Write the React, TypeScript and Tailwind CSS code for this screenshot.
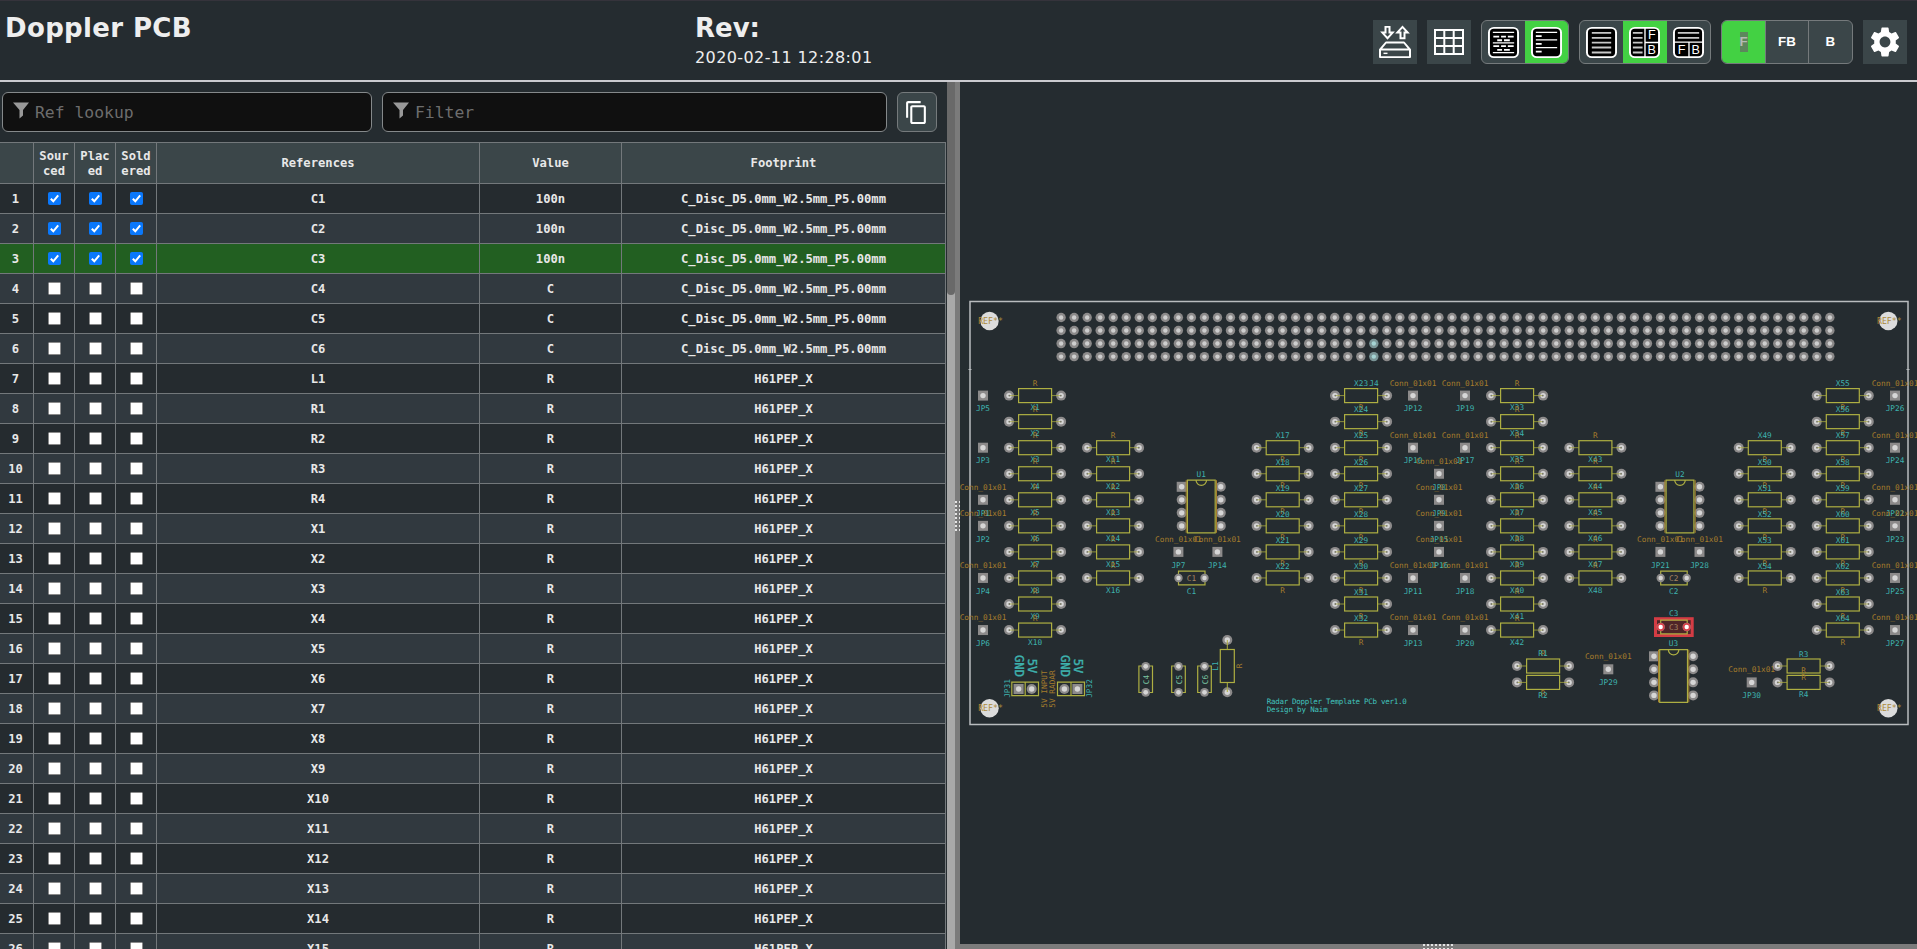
import React from "react";
import { MdContentCopy, MdSettings } from "react-icons/md";

const references = [
  "C1", "C2", "C3", "C4", "C5", "C6", "L1", "R1", "R2", "R3", "R4",
  "X1", "X2", "X3", "X4", "X5", "X6", "X7", "X8", "X9", "X10", "X11", "X12", "X13", "X14", "X15",
];

const rows = references.map((ref, i) => ({
  ref,
  value: i < 3 ? "100n" : i < 6 ? "C" : "R",
  footprint: i < 6 ? "C_Disc_D5.0mm_W2.5mm_P5.00mm" : "H61PEP_X",
  checked: i < 3,
}));

const gridCols = "grid grid-cols-[34px_41px_41px_41px_323px_142px_324px]";
const boxCell = "flex items-center justify-center border-r border-b border-[#73787b]";
const cell = "flex items-center justify-center border-r border-b border-[#73787b] pt-px";

function Checkbox({ checked }: { checked: boolean }) {
  return (
    <svg width="13" height="13" viewBox="0 0 13 13">
      <rect x="0.5" y="0.5" width="12" height="12" rx="1" fill={checked ? "#0a78fb" : "#fff"} stroke={checked ? "#0a78fb" : "#8a8a8a"} />
      {checked && <path d="M2.8 6.8 L5.3 9.3 L10.2 3.3" fill="none" stroke="#fff" strokeWidth="2" />}
    </svg>
  );
}

function Header() {
  return (
    <header className="flex h-[82px] shrink-0 border-t border-b-2 border-t-[#35333b] border-b-[#cbcbd0] bg-[#252c30]">
      <h1 className="w-[690px] pt-[11px] pl-[5px] font-['DejaVu_Sans'] text-[26px] leading-8 font-bold tracking-[0.35px] text-[#eee]">Doppler PCB</h1>
      <div className="flex-1 pt-[11px] pl-[5px] font-['DejaVu_Sans'] text-[#eee]">
        <div className="text-[26px] leading-8 font-bold">Rev:</div>
        <div className="pt-[2px] text-[16px] leading-6 tracking-[0.4px]">2020-02-11 12:28:01</div>
      </div>
      <Toolbar />
    </header>
  );
}

const frame = { width: 31, height: 31, viewBox: "0 0 32 34", fill: "none", stroke: "#fff", preserveAspectRatio: "none" };

function Toolbar() {
  const group = "flex overflow-hidden rounded-[6px] border border-[#757a7c] bg-[#3b4649]";
  const item = "flex w-[44px] items-center justify-center";
  return (
    <div className="mt-[19px] mr-[10px] flex h-[44px] gap-[10px]">
      <div className="flex w-[44px] items-center justify-center bg-[#3b4649]">
        <svg width="34" height="34" viewBox="0 0 34 36" preserveAspectRatio="none" fill="none" stroke="#fff" strokeWidth="2">
          <path d="M7.5 2h4v6h3.2l-5.2 6l-5.2-6h3.2z" />
          <path d="M22.500 14v-6h-3.2l5.2-6l5.2 6h-3.2v6z" />
          <path d="M2 26L8 18.500H26L32 26V34H2z M2 26H32" strokeLinejoin="round" />
          <path d="M5.500 30h4" strokeWidth="1.5" />
        </svg>
      </div>
      <div className="flex w-[44px] items-center justify-center bg-[#3b4649]">
        <svg width="30" height="26" viewBox="0 0 30 26" fill="none" stroke="#fff" strokeWidth="2">
          <path d="M1 1H29V25H1z M10.3 1V25 M19.7 1V25 M1 9H29 M1 17H29" />
        </svg>
      </div>
      <div className={`${group} w-[88px]`}>
        <div className="flex w-[43px] items-center justify-center pr-px">
          <svg {...frame}>
            <rect x="1" y="1" width="30" height="32" rx="5" fill="#000" strokeWidth="2" />
            <path d="M5 6H27 M5 17.5H27 M5 28H27" strokeWidth="1.4" />
            <path d="M5.500 10.500h6 M13.500 10.500h5 M20.500 10.500h6 M9.500 14.500h5 M16.500 14.500h6 M5.500 21h6 M13.500 21h5 M20.500 21h6 M9.500 25h5 M16.500 25h6" strokeWidth="2" />
          </svg>
        </div>
        <div className="flex w-[43px] flex-1 items-center justify-center bg-[#43d143]">
          <svg {...frame}>
            <rect x="1" y="1" width="30" height="32" rx="5" fill="#000" strokeWidth="2" />
            <path d="M5 6H27 M5 14H27 M5 22.500H27" strokeWidth="1.4" />
            <path d="M5 10h6 M5 18.500h6 M5 27h6" strokeWidth="2" />
          </svg>
        </div>
      </div>
      <div className={`${group} w-[132px]`}>
        <div className={item}>
          <svg {...frame}>
            <rect x="1" y="1" width="30" height="32" rx="5" fill="#000" strokeWidth="2" />
            <path d="M6 6.500H26 M6 12H26 M6 17.200H26 M6 22.500H26 M6 28H26" strokeWidth="2" stroke="#c8c8c8" />
          </svg>
        </div>
        <div className={`${item} bg-[#43d143]`}>
          <svg {...frame}>
            <rect x="1" y="1" width="30" height="32" rx="5" fill="#000" strokeWidth="2" />
            <path d="M4 6.500H14 M4 12H14 M4 17.200H14 M4 22.500H14 M4 28H14" strokeWidth="2" stroke="#c8c8c8" />
            <path d="M16.500 1V33 M16.500 17H31" strokeWidth="1.4" />
            <text x="23.500" y="13.500" textAnchor="middle" fontFamily="Liberation Sans" fontSize="13" fill="#fff" stroke="none">F</text>
            <text x="23.500" y="29.500" textAnchor="middle" fontFamily="Liberation Sans" fontSize="13" fill="#fff" stroke="none">B</text>
          </svg>
        </div>
        <div className={`${item} pl-px`}>
          <svg {...frame}>
            <rect x="1" y="1" width="30" height="32" rx="5" fill="#000" strokeWidth="2" />
            <path d="M5 6.500H27 M5 12H27" strokeWidth="2" stroke="#c8c8c8" />
            <path d="M1 16.500H31 M16.500 16.500V33" strokeWidth="1.4" />
            <text x="9" y="29.500" textAnchor="middle" fontFamily="Liberation Sans" fontSize="13" fill="#fff" stroke="none">F</text>
            <text x="23.500" y="29.500" textAnchor="middle" fontFamily="Liberation Sans" fontSize="13" fill="#fff" stroke="none">B</text>
          </svg>
        </div>
      </div>
      <div className={`${group} w-[132px] font-['Liberation_Sans'] text-[13.33px] font-bold text-white`}>
        <div className={`${item} bg-[#43d143]`}><span className="bg-[#5c875c] text-[#b5bab5]">F</span></div>
        <div className={`${item} border-r border-l border-[#757a7c]`}>FB</div>
        <div className={item}>B</div>
      </div>
      <div className="flex w-[44px] items-center justify-center bg-[#3b4649]">
        <MdSettings className="text-[36px] text-white" />
      </div>
    </div>
  );
}

function FilterInput({ label, size }: { label: string; size: string }) {
  return (
    <div className={`${size} flex h-[40px] items-center rounded-[6px] border border-[#85898b] bg-[#101010] pl-[10px]`}>
      <svg width="17" height="17" viewBox="0 0 17 17" className="-mt-[4px]"><path d="M0 0.500H16L10 8V13.500L6.500 16.500V8z" fill="#999" /></svg>
      <span className="pt-[2px] pl-[5px] font-['DejaVu_Sans_Mono'] text-[16.4px] text-[#6d6d6d]">{label}</span>
    </div>
  );
}

function BomPane() {
  return (
    <div className="flex w-[955px] shrink-0 overflow-hidden">
      <div className="w-[947px] shrink-0">
        <div className="flex h-[60px] gap-[10px] pt-[10px] pl-[2px]">
          <FilterInput label="Ref lookup" size="w-[370px]" />
          <FilterInput label="Filter" size="w-[505px]" />
          <div className="flex size-[40px] items-center justify-center rounded-[6px] border border-[#757a7c] bg-[#3b4649] pr-px">
            <MdContentCopy className="text-[25px] text-white" />
          </div>
        </div>
        <div className="w-[946px] border-t border-[#73787b] font-['DejaVu_Sans_Mono'] text-[12.17px] font-bold text-[#e8e8e8]">
          <div className={`${gridCols} h-[41px] bg-[#3b4649] leading-[15px]`}>
            <div className={cell} />
            <div className={`${cell} text-center`}>Sour<br />ced</div>
            <div className={`${cell} text-center`}>Plac<br />ed</div>
            <div className={`${cell} text-center`}>Sold<br />ered</div>
            <div className={cell}>References</div>
            <div className={cell}>Value</div>
            <div className={cell}>Footprint</div>
          </div>
          {rows.map((r, i) => (
            <div key={r.ref} className={`${gridCols} h-[30px] leading-[14px] ${i === 2 ? "bg-[#225f21]" : i % 2 ? "bg-[#31393f]" : "bg-[#252b2f]"}`}>
              <div className={`${cell} pr-[2px]`}>{i + 1}</div>
              <div className={boxCell}><Checkbox checked={r.checked} /></div>
              <div className={boxCell}><Checkbox checked={r.checked} /></div>
              <div className={boxCell}><Checkbox checked={r.checked} /></div>
              <div className={cell}>{r.ref}</div>
              <div className={cell}>{r.value}</div>
              <div className={cell}>{r.footprint}</div>
            </div>
          ))}
        </div>
      </div>
      <div className="w-[8px] bg-[#a9a9a9]">
        <div className="h-[213px] rounded-b-[4px] bg-[#696969]" />
      </div>
    </div>
  );
}

const PITCH = 26.05;
const rowY = (r: number) => 395.6 + PITCH * r;
const TEAL = "#3eb2ae";
const BROWN = "#a67d2c";
const YELLOW = "#aeaf42";
const PAD = "#8c8a8a";
const HOLE = "#d6d6d6";

function Label({ x, y, children, color = TEAL, rot = 0, size = 7.75 }: { x: number; y: number; children: string; color?: string; rot?: number; size?: number }) {
  return (
    <text x={x} y={y} fontSize={size} fill={color} textAnchor="middle" dy={size * 0.36} transform={rot ? `rotate(${rot} ${x} ${y})` : undefined}>
      {children}
    </text>
  );
}

function Pad({ x, y, r = 5, square = false }: { x: number; y: number; r?: number; square?: boolean }) {
  return (
    <g>
      {square ? <rect x={x - r} y={y - r} width={2 * r} height={2 * r} fill={PAD} /> : <circle cx={x} cy={y} r={r} fill={PAD} />}
      <circle cx={x} cy={y} r={r * 0.54} fill={HOLE} />
    </g>
  );
}

function Resistor({ x, y }: { x: number; y: number }) {
  return (
    <g>
      <Pad x={x} y={y} />
      <Pad x={x + 52.1} y={y} />
      <path d={`M${x} ${y}H${x + 9.6} M${x + 42.6} ${y}H${x + 52.1}`} stroke={YELLOW} strokeOpacity="0.75" />
      <circle cx={x + 0.3} cy={y} r="0.9" fill="#77776a" />
      <circle cx={x + 51.8} cy={y} r="0.9" fill="#77776a" />
      <rect x={x + 9.6} y={y - 7} width="33" height="14" fill="none" stroke={YELLOW} strokeWidth="1.2" />
    </g>
  );
}

const columns = [
  { x: 1009, first: 1, row: 0, count: 10, above: false },
  { x: 1087, first: 11, row: 2, count: 6, above: false },
  { x: 1256.6, first: 17, row: 2, count: 6, above: true },
  { x: 1335, first: 23, row: 0, count: 10, above: true },
  { x: 1491, first: 33, row: 0, count: 10, above: false },
  { x: 1569.3, first: 43, row: 2, count: 6, above: false },
  { x: 1738.7, first: 49, row: 2, count: 6, above: true },
  { x: 1816.7, first: 55, row: 0, count: 10, above: true },
];

const jumpers: [string, number, number, boolean][] = [
  ["JP5", 983, rowY(0), false], ["JP3", 983, rowY(2), false], ["JP1", 983, rowY(4), true],
  ["JP2", 983, rowY(5), true], ["JP4", 983, rowY(7), true], ["JP6", 983, rowY(9), true],
  ["JP12", 1413, rowY(0), true], ["JP19", 1465, rowY(0), true], ["JP10", 1413, rowY(2), true],
  ["JP17", 1465, rowY(2), true], ["JP8", 1439, rowY(3), true], ["JP9", 1439, rowY(4), true],
  ["JP15", 1439, rowY(5), true], ["JP16", 1439, rowY(6), true], ["JP11", 1413, rowY(7), true],
  ["JP18", 1465, rowY(7), true], ["JP13", 1413, rowY(9), true], ["JP20", 1465, rowY(9), true],
  ["JP7", 1178.4, rowY(6), true], ["JP14", 1217.4, rowY(6), true],
  ["JP21", 1660.4, rowY(6), true], ["JP28", 1699.5, rowY(6), true],
  ["JP26", 1895, rowY(0), true], ["JP24", 1895, rowY(2), true], ["JP22", 1895, rowY(4), true],
  ["JP23", 1895, rowY(5), true], ["JP25", 1895, rowY(7), true], ["JP27", 1895, rowY(9), true],
  ["JP29", 1608.3, 669.3, true], ["JP30", 1751.7, 682.4, true],
];

function Chip({ name, x, y }: { name: string; x: number; y: number }) {
  return (
    <g>
      {[0, 1, 2, 3].map((i) => (
        <g key={i}>
          <Pad x={x} y={y + 13.03 * i} square={i === 0} />
          <Pad x={x + 39.1} y={y + 13.03 * i} />
        </g>
      ))}
      <path d={`M${x + 4.5} ${y - 6.6}V${y + 46} M${x + 34.8} ${y - 6.6}V${y + 46}`} stroke={BROWN} strokeWidth="1" />
      <path d={`M${x + 5.7} ${y - 6.7}H${x + 33.5}V${y + 46.1}H${x + 5.7}z M${x + 14.3} ${y - 6.7}a5.3 5.3 0 0 0 10.6 0`} stroke={YELLOW} fill="none" strokeWidth="1.2" />
      <Label x={x + 19.5} y={y - 13}>{name}</Label>
    </g>
  );
}

function DiscCap({ name, x, y, labelY }: { name: string; x: number; y: number; labelY: number }) {
  return (
    <g>
      <path d={`M${x} ${y - 3.5}V${y - 6.8}H${x + 26.5}V${y - 3.5} M${x} ${y + 3.5}V${y + 6.8}H${x + 26.5}V${y + 3.5}`} stroke={YELLOW} fill="none" strokeWidth="1.2" />
      <Pad x={x} y={y} r={4.2} />
      <Pad x={x + 26} y={y} r={4.2} />
      <Label x={x + 13} y={y} color="#a58463">{name}</Label>
      <Label x={x + 13} y={labelY}>{name}</Label>
    </g>
  );
}

function Board() {
  return (
    <svg viewBox="960 82 957 862" className="block h-[862px] w-[957px]" fontFamily="'DejaVu Sans Mono', monospace">
      <rect x="970" y="301.5" width="938" height="423" fill="none" stroke="#b9bcbe" strokeWidth="1.5" />
      <path d="M968.5 369.5h3 M1906.5 369.5h3" stroke="#b9bcbe" />
      {Array.from({ length: 240 }, (_, i) => {
        const c = i % 60;
        const r = Math.floor(i / 60);
        const tinted = c === 24 && r > 1;
        return (
          <g key={i}>
            <circle cx={1061.1 + c * 13.03} cy={317.5 + r * 13.03} r="4.7" fill={tinted ? "#7a9496" : "#8b8989"} />
            <circle cx={1061.1 + c * 13.03} cy={317.5 + r * 13.03} r="2.2" fill={tinted ? "#a5d3d3" : "#cecece"} />
          </g>
        );
      })}
      <Label x={1374} y={383}>J4</Label>

      {columns.map((col) =>
        Array.from({ length: col.count }, (_, i) => {
          const y = rowY(col.row + i);
          const cx = col.x + 26.05;
          return (
            <g key={col.first + i}>
              <Resistor x={col.x} y={y} />
              <Label x={cx} y={col.above ? y + 11.8 : y - 12.3} color={BROWN}>R</Label>
              <Label x={cx} y={col.above ? y - 12 : y + 12}>{`X${col.first + i}`}</Label>
            </g>
          );
        })
      )}

      <Resistor x={1517} y={666} />
      <Resistor x={1517} y={682.4} />
      <Label x={1543} y={653.5} color={BROWN}>R</Label>
      <Label x={1543} y={653.5}>R1</Label>
      <Label x={1543} y={693.5} color={BROWN}>R</Label>
      <Label x={1543} y={695}>R2</Label>
      <Resistor x={1777.5} y={666} />
      <Resistor x={1777.5} y={682.4} />
      <Label x={1803.7} y={654.3}>R3</Label>
      <Label x={1803.7} y={694.5}>R4</Label>
      <Label x={1803.7} y={670} color={BROWN}>R</Label>
      <Label x={1803.7} y={677.5} color={BROWN}>R</Label>

      {jumpers.map(([name, x, y, conn]) => (
        <g key={name}>
          <Pad x={x} y={y} square />
          {conn && <Label x={x} y={y - 12.8} color={BROWN}>Conn_01x01</Label>}
          <Label x={x} y={y + 13}>{name}</Label>
        </g>
      ))}

      <Chip name="U1" x={1181.7} y={486.8} />
      <Chip name="U2" x={1660.4} y={486.8} />
      <Chip name="U3" x={1654} y={656.3} />

      <DiscCap name="C1" x={1178.5} y={578} labelY={591} />
      <DiscCap name="C2" x={1660.7} y={578} labelY={591} />
      <rect x="1655.5" y="618.7" width="36.7" height="16.8" fill="#4f2528" stroke="#d43c44" strokeWidth="3" />
      <DiscCap name="C3" x={1660.7} y={627} labelY={613.7} />
      <circle cx="1660.7" cy="627" r="4" fill="#d8434b" />
      <circle cx="1686.7" cy="627" r="4" fill="#d8434b" />
      <circle cx="1660.7" cy="627" r="2.2" fill="#fff" />
      <circle cx="1686.7" cy="627" r="2.2" fill="#fff" />

      {[["C4", 1145.7], ["C5", 1178.5], ["C6", 1204.5]].map(([name, cx]) => {
        const x = Number(cx);
        return (
          <g key={name}>
            <path d={`M${x - 3} 666H${x - 6.8}V692.5H${x - 3} M${x + 3} 666H${x + 6.8}V692.5H${x + 3}`} fill="none" stroke={YELLOW} strokeWidth="1.2" />
            <Pad x={x} y={666.3} r={4.4} />
            <Pad x={x} y={692.3} r={4.4} />
            <Label x={x + 0.5} y={679.5} rot={-90} color="#7cc5a2">{String(name)}</Label>
          </g>
        );
      })}

      <Pad x={1227.3} y={640} />
      <Pad x={1227.3} y={692.2} />
      <path d="M1227.3 640V649.5 M1227.3 682.5V692" stroke={YELLOW} />
      <rect x="1220.3" y="649.5" width="14" height="33" fill="none" stroke={YELLOW} strokeWidth="1.2" />
      <Label x={1215.5} y={666} rot={-90}>L1</Label>
      <Label x={1239.3} y={666} rot={-90} color={BROWN}>R</Label>

      <Pad x={1018.6} y={689} square />
      <Pad x={1031.7} y={689} />
      <Pad x={1064.4} y={689} />
      <Pad x={1077.4} y={689} square />
      <path d="M1011.8 682.2H1038.5V695.6H1011.8z M1025.2 682V695.6 M1057.5 682.2H1084.5V695.6H1057.5z M1071 682V695.6" fill="none" stroke={YELLOW} strokeWidth="1.2" />
      <Label x={1007} y={688.5} rot={-90}>JP31</Label>
      <Label x={1089.3} y={688.5} rot={-90}>JP32</Label>
      <Label x={1044} y={689} rot={-90} color={BROWN}>5V INPUT</Label>
      <Label x={1052.5} y={689} rot={-90} color={BROWN}>5V RADAR</Label>
      <g stroke={TEAL} strokeWidth="0.4">
        <Label x={1019} y={666} rot={90} size={12.2}>GND</Label>
        <Label x={1032} y={666} rot={90} size={12.2}>5V</Label>
        <Label x={1065} y={666} rot={90} size={12.2}>GND</Label>
        <Label x={1078} y={666} rot={90} size={12.2}>5V</Label>
      </g>
      <text x="1266.7" y="703.5" fontSize="7.5" textLength="140" fill="#42c4be">Radar Doppler Template PCb ver1.0</text>
      <text x="1266.7" y="712.2" fontSize="7.5" textLength="61" fill="#42c4be">Design by Naim</text>

      {[[989.5, 321], [989.5, 708.3], [1888.3, 321], [1888.3, 708.3]].map(([x, y]) => (
        <g key={`${x}-${y}`}>
          <circle cx={x} cy={y} r="9.2" fill="#dcdcdc" />
          <Label x={x + 1} y={y} size={8.2} color="#ac8a3a">REF**</Label>
        </g>
      ))}
    </svg>
  );
}

function Grip({ vertical = false }: { vertical?: boolean }) {
  return (
    <div className={`grid gap-[2px] overflow-hidden ${vertical ? "h-[30px] w-[5px] grid-cols-[2px_2px]" : "h-[5px] w-[30px] grid-cols-[repeat(8,2px)]"}`}>
      {Array.from({ length: 16 }, (_, i) => <div key={i} className="size-[2px] bg-[#e4e4e4]" />)}
    </div>
  );
}

export default function App() {
  return (
    <div className="flex h-[949px] w-full flex-col overflow-hidden bg-[#252c30]">
      <Header />
      <div className="flex min-h-0 flex-1">
        <BomPane />
        <div className="flex w-[5px] shrink-0 items-center bg-[#7b7b7b]"><Grip vertical /></div>
        <div className="flex min-w-0 flex-1 flex-col">
          <Board />
          <div className="flex h-[5px] shrink-0 justify-center bg-[#7b7b7b] pr-[2px]"><Grip /></div>
        </div>
      </div>
    </div>
  );
}
